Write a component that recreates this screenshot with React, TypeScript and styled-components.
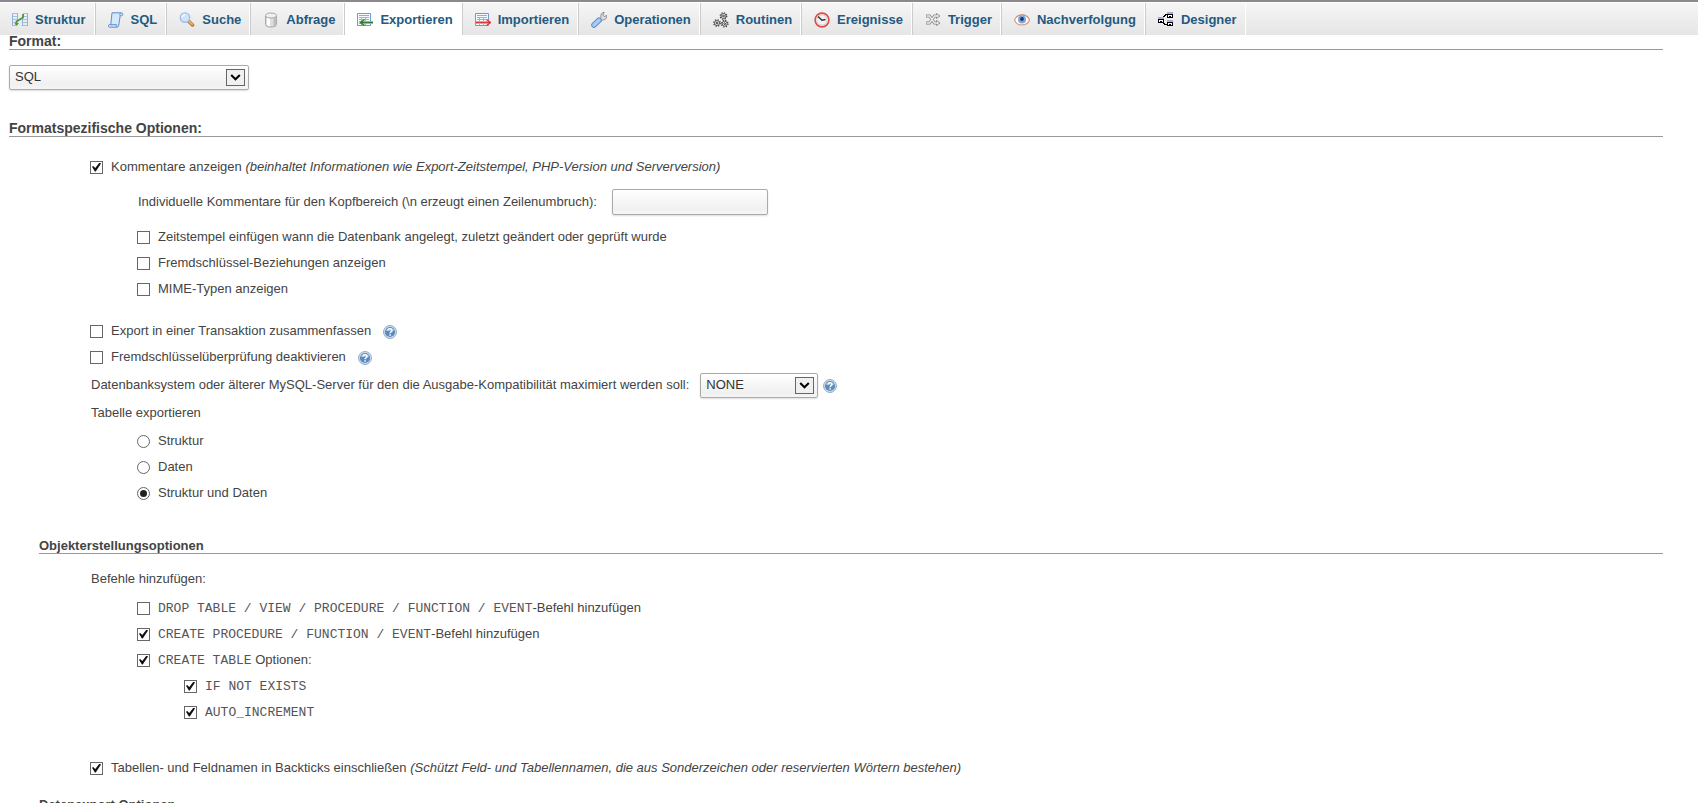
import React from "react";
import styled, { createGlobalStyle } from "styled-components";

const GlobalStyle = createGlobalStyle`
  *, *::before, *::after { box-sizing: border-box; }
  body {
    margin: 0;
    background: #fff;
    color: #444;
    font: 13px/26px "Liberation Sans", Arial, Helvetica, sans-serif;
  }
`;

const TabBar = styled.nav`
  border-top: 2px solid #8c888c;
  background: linear-gradient(#fff, #fff 1px, #f6f6f6 1px, #e5e5e5);
`;

const TabList = styled.ul`
  display: flex;
  margin: 0;
  padding: 1px 0 0;
  list-style: none;
`;

const TabItem = styled.li`
  border-left: 1px solid #ccc;
  border-right: 1px solid #fff;
  &:first-child {
    border-left: 0;
  }
`;

const TabLink = styled.a<{ $active?: boolean }>`
  display: flex;
  align-items: center;
  gap: 7px;
  height: 32px;
  padding: 1px 8px 0 12px;
  background: ${(p) => (p.$active ? "#fff" : "transparent")};
  color: #235a81;
  font-weight: bold;
  text-decoration: none;
  white-space: nowrap;
`;

const TabIcon = styled.svg`
  flex: none;
  width: 16px;
  height: 16px;
`;

const Page = styled.form`
  margin: 0 35px 0 9px;
`;

const Indented = styled.section`
  margin-left: 30px;
`;

const headingBase = `
  margin: 0;
  border-bottom: 1px solid #999;
  font-weight: bold;
`;

const Heading = styled.h3`
  ${headingBase}
  padding-bottom: 2px;
  font-size: 14px;
  line-height: 12px;
`;

const SubHeading = styled.h4`
  ${headingBase}
  font-size: 13px;
  line-height: 14px;
`;

const FormatField = styled.div`
  display: flex;
  padding: 15px 0 32px;
`;

const Options = styled.div<{ $top: number; $bottom: number }>`
  padding: ${(p) => p.$top}px 0 ${(p) => p.$bottom}px;
`;

const OptionList = styled.ul<{ $level?: number; $top?: number; $bottom?: number }>`
  margin: 0;
  padding: ${(p) => p.$top ?? 0}px 0 ${(p) => p.$bottom ?? 0}px ${(p) => p.$level ?? 0}px;
  list-style: none;
`;

const Row = styled.div<{ $height?: number; $gap?: number }>`
  display: flex;
  align-items: center;
  gap: ${(p) => p.$gap ?? 8}px;
  min-height: ${(p) => p.$height ?? 26}px;
  padding-left: 1px;
  > label {
    margin-right: 6px;
  }
`;

const HelpLink = styled.a`
  display: flex;
  padding-top: 2px;
`;

const OptionRow = styled.li`
  display: flex;
  align-items: center;
  gap: 8px;
  height: 26px;
  > ${HelpLink} {
    margin-left: 4px;
  }
`;

const tickBase = `
  appearance: none;
  flex: none;
  display: grid;
  place-items: center;
  width: 13px;
  height: 13px;
  margin: 0;
  border: 1px solid #666;
  background: #fff;
`;

const Checkbox = styled.input.attrs({ type: "checkbox" })`
  ${tickBase}
  &:checked::before {
    content: "";
    width: 9px;
    height: 9px;
    background: #111;
    clip-path: polygon(0 48%, 14% 38%, 36% 62%, 84% 0, 100% 10%, 42% 100%, 32% 100%);
  }
`;

const Radio = styled.input.attrs({ type: "radio" })`
  ${tickBase}
  border-radius: 50%;
  &:checked::before {
    content: "";
    width: 7px;
    height: 7px;
    border-radius: 50%;
    background: #222;
  }
`;

const Code = styled.code`
  color: #555;
  font: 13px "Liberation Mono", "Courier New", monospace;
`;

const controlBase = `
  border: 1px solid #aaa;
  border-radius: 2px;
  background: linear-gradient(#fff, #f0f0f0 80%, #f6f6f6);
  box-shadow: 0 1px 2px #ddd;
  color: #333;
  font: inherit;
`;

const TextInput = styled.input`
  ${controlBase}
  width: 156px;
  height: 26px;
  padding: 0 5px;
`;

const SelectBox = styled.div<{ $width: number }>`
  display: grid;
  align-items: center;
  width: ${(p) => p.$width}px;
  > * {
    grid-area: 1 / 1;
  }
`;

const SelectControl = styled.select`
  ${controlBase}
  appearance: none;
  width: 100%;
  height: 25px;
  padding: 0 28px 1px 5px;
  line-height: 22px;
`;

const SelectArrow = styled.svg`
  justify-self: end;
  width: 19px;
  height: 17px;
  margin-right: 4px;
  pointer-events: none;
`;

function Select({ id, width, options }: { id: string; width: number; options: string[] }) {
  return (
    <SelectBox $width={width}>
      <SelectControl id={id}>
        {options.map((o) => (
          <option key={o}>{o}</option>
        ))}
      </SelectControl>
      <SelectArrow viewBox="0 0 19 17" aria-hidden="true">
        <rect x=".5" y=".5" width="18" height="16" fill="#f0f0f0" stroke="#666" />
        <path d="M5.2 6l4.3 4.3L13.8 6" fill="none" stroke="#000" strokeWidth="2" />
      </SelectArrow>
    </SelectBox>
  );
}

function Help() {
  return (
    <HelpLink href="#doc" aria-label="Dokumentation">
      <svg width="14" height="14" viewBox="0 0 14 14" aria-hidden="true">
        <circle cx="7" cy="7" r="6.4" fill="#dce6ef" stroke="#8aa3bd" strokeWidth="1" />
        <circle cx="7" cy="7" r="5.1" fill="#5a8bbf" />
        <path d="M2.6 6a4.6 4.2 0 0 1 8.8 0z" fill="#8fb3d8" />
        <path d="M5 5.6c0-2.6 4-2.5 4-.2C9 6.8 7.1 6.7 7.1 8.3M7.1 9.3v1.5" fill="none" stroke="#fff" strokeWidth="1.5" />
      </svg>
    </HelpLink>
  );
}

function CheckOption({
  id,
  checked,
  help,
  children,
}: {
  id: string;
  checked?: boolean;
  help?: boolean;
  children: React.ReactNode;
}) {
  return (
    <OptionRow>
      <Checkbox id={id} defaultChecked={checked} />
      <label htmlFor={id}>{children}</label>
      {help && <Help />}
    </OptionRow>
  );
}

function RadioOption({ id, checked, children }: { id: string; checked?: boolean; children: React.ReactNode }) {
  return (
    <OptionRow>
      <Radio id={id} name="structure_or_data" defaultChecked={checked} />
      <label htmlFor={id}>{children}</label>
    </OptionRow>
  );
}

const sheet = (
  <>
    <path d="M.5 1.5h13v12H.5z" fill="#f5faff" stroke="#6f9bd0" />
    <path d="M2 3.5h10" stroke="#8fbf7d" />
    <path d="M2 5.5h10M2 7.5h10M2 9.5h10M2 11.5h10M4.5 5v8M8.5 5v8" stroke="#8fb8e0" fill="none" />
  </>
);

const gear = (x: number, y: number) => (
  <g transform={`translate(${x} ${y})`}>
    <circle r="3.3" fill="none" stroke="#444" strokeWidth="1.2" strokeDasharray="1.3 1.3" />
    <circle r="2.5" fill="#fff" stroke="#444" strokeWidth=".9" />
    <circle r=".9" fill="#fff" stroke="#222" strokeWidth=".9" />
  </g>
);

const tabs: { label: string; active?: boolean; icon: React.ReactNode }[] = [
  {
    label: "Struktur",
    icon: (
      <>
        <path d="M0 1.5h6M0 4.5h5M0 7.5h5M0 10.5h5M0 13.5h4M11 1.5h5M11 4.5h5M11 7.5h5M11 10.5h5M10 13.5h6" stroke="#9ec3e6" />
        <path d="M.5 2v12M5.5 1v8M10.5 7v7M15.5 1v13" stroke="#8cb4dc" />
        <path d="M4.5 13V9.5L11 5.5V2" stroke="#4d9a45" strokeWidth="1.9" fill="none" />
        <path d="M2.5 11l2 3 2.500-3z" fill="#4d9a45" />
      </>
    ),
  },
  {
    label: "SQL",
    icon: (
      <>
        <path d="M4 .8h9.5c1.8.1 1.8 2.7.2 2.9h-1.500l-1.400 9.300c-.2 1.500-1 2.200-2.200 2.200H1.500C-.1 14.900.1 12.700 1.600 12.500h1.200z" fill="#cfe3f8" stroke="#5f8fcb" />
        <path d="M4.8 2h6.600L9.900 12.500H4z" fill="#d6e8fb" />
        <path d="M2 12.7h6.500c-.4 1 .1 2 .8 2.200M12 3.500c-.6-.8-.2-2 .8-2.300" fill="none" stroke="#5f8fcb" />
      </>
    ),
  },
  {
    label: "Suche",
    icon: (
      <>
        <path d="M9.5 9l4 4" stroke="#b87a3c" strokeWidth="3.6" strokeLinecap="round" />
        <path d="M9.5 8.8l3.700 3.600" stroke="#edb866" strokeWidth="1.6" strokeLinecap="round" />
        <circle cx="6" cy="5.6" r="4.7" fill="#cfe4fa" stroke="#9dbfe8" strokeWidth="1.4" />
        <path d="M3 5.2C3.3 3.5 4.6 2.7 6 2.6" stroke="#fff" fill="none" strokeWidth="1.3" />
      </>
    ),
  },
  {
    label: "Abfrage",
    icon: (
      <>
        <path d="M2.5 3.5v9c0 3.4 11 3.4 11 0v-9z" fill="#dedede" stroke="#a8a8a8" />
        <path d="M4 6v7c1 .9 2 1 3 1.200V6.500z" fill="#fff" />
        <path d="M10.5 6.3V14c1 0 1.800-.5 2.300-1V5.500z" fill="#bcbcbc" />
        <ellipse cx="8" cy="3.5" rx="5.5" ry="2.5" fill="#f0f0f0" stroke="#a8a8a8" />
      </>
    ),
  },
  {
    label: "Exportieren",
    active: true,
    icon: (
      <>
        {sheet}
        <path d="M6 10.5h10" stroke="#fff" strokeWidth="3" />
        <path d="M4 10.5h12" stroke="#2f7d32" strokeWidth="2" />
        <path d="M7.5 7.500l-4 3 4 3" fill="none" stroke="#2f7d32" strokeWidth="1.5" />
      </>
    ),
  },
  {
    label: "Importieren",
    icon: (
      <>
        {sheet}
        <path d="M2 10.5h13" stroke="#fff" strokeWidth="3" />
        <path d="M1 10.5h14" stroke="#d8393b" strokeWidth="2" />
        <path d="M11.5 7.500l4 3-4 3" fill="none" stroke="#d8393b" strokeWidth="1.5" />
      </>
    ),
  },
  {
    label: "Operationen",
    icon: (
      <>
        <path d="M8 8.5l2-3.200c-.8-2.600.8-4.900 3.200-5l-1.300 2.700 1.300 1.500 2.600-1c.3 2.900-1.800 4.700-4.200 4.300L9.500 10z" fill="#dcdcdc" stroke="#858585" strokeWidth=".9" />
        <path d="M3 13l5-4.800" stroke="#5c8dcc" strokeWidth="5.6" strokeLinecap="round" />
        <path d="M3 13l5-4.800" stroke="#a9c9f0" strokeWidth="3.6" strokeLinecap="round" />
      </>
    ),
  },
  {
    label: "Routinen",
    icon: (
      <>
        {gear(10.5, 4)}
        {gear(4, 11)}
        {gear(11.7, 11.7)}
      </>
    ),
  },
  {
    label: "Ereignisse",
    icon: (
      <>
        <circle cx="8" cy="8" r="6.900" fill="#fff" stroke="#dd4b4b" strokeWidth="1.6" />
        <circle cx="8" cy="8" r="5.200" fill="#f3f3f3" stroke="#bbb" strokeWidth=".7" />
        <path d="M4 4.500L8 8.300l3.500-.8" fill="none" stroke="#333" strokeWidth="1.5" />
      </>
    ),
  },
  {
    label: "Trigger",
    icon: (
      <>
        <path d="M1 4h3.500l5 7H12M1 11h3.500l5-7H12" stroke="#858585" strokeWidth="3" fill="none" />
        <path d="M11.500 1.500L15 4l-3.500 2.500zM11.500 8.500L15 11l-3.500 2.500z" fill="#eee" stroke="#858585" strokeWidth=".9" />
        <path d="M1.500 4h3l5 7H12M1.500 11h3l5-7H12" stroke="#eee" strokeWidth="1.300" fill="none" />
      </>
    ),
  },
  {
    label: "Nachverfolgung",
    icon: (
      <>
        <path d="M.5 8C2.500 1.500 13.500 1.500 15.500 8c-2 6.500-13 6.500-15 0z" fill="#fff" stroke="#d9a183" strokeWidth="1.300" />
        <circle cx="8" cy="7.500" r="4" fill="#7fa6dc" />
        <circle cx="8" cy="7" r="1.900" fill="#1f3763" />
        <path d="M2 5.500C5 1.800 11 1.800 14 5.500" fill="none" stroke="#c98f74" />
      </>
    ),
  },
  {
    label: "Designer",
    icon: (
      <g shapeRendering="crispEdges">
        <path d="M9 0h6v2H9zM0 5h6v2H0zM9 8h6v2H9z" fill="#aaaadf" />
        <path d="M9.500 2.500h5v3h-5zM.5 7.500h5v3h-5zM9.500 10.500h5v3h-5z" fill="#fff" stroke="#000" />
        <path d="M11 4h2M2 9h2M11 12h2" stroke="#000" />
        <path d="M5 4.500h1v-1h1v-1h2M5 11.500h1v1h3" stroke="#000" fill="none" />
      </g>
    ),
  },
];

export default function App() {
  return (
    <>
      <GlobalStyle />
      <TabBar>
        <TabList>
          {tabs.map((t) => (
            <TabItem key={t.label}>
              <TabLink href={`#${t.label}`} $active={t.active}>
                <TabIcon viewBox="0 0 16 16" aria-hidden="true">
                  {t.icon}
                </TabIcon>
                {t.label}
              </TabLink>
            </TabItem>
          ))}
        </TabList>
      </TabBar>
      <Page>
        <Heading>
          <label htmlFor="format">Format:</label>
        </Heading>
        <FormatField>
          <Select id="format" width={240} options={["SQL"]} />
        </FormatField>

        <Heading>Formatspezifische Optionen:</Heading>
        <Options $top={17} $bottom={33}>
          <OptionList $level={81}>
            <CheckOption id="comments" checked>
              Kommentare anzeigen <em>(beinhaltet Informationen wie Export-Zeitstempel, PHP-Version und Serverversion)</em>
            </CheckOption>
          </OptionList>
          <OptionList as="div" $level={128}>
            <Row $height={44} $gap={9}>
              <label htmlFor="header">Individuelle Kommentare für den Kopfbereich (\n erzeugt einen Zeilenumbruch):</label>
              <TextInput id="header" type="text" />
            </Row>
          </OptionList>
          <OptionList $level={128} $bottom={16}>
            <CheckOption id="dates">Zeitstempel einfügen wann die Datenbank angelegt, zuletzt geändert oder geprüft wurde</CheckOption>
            <CheckOption id="relations">Fremdschlüssel-Beziehungen anzeigen</CheckOption>
            <CheckOption id="mime">MIME-Typen anzeigen</CheckOption>
          </OptionList>
          <OptionList $level={81}>
            <CheckOption id="transaction" help>
              Export in einer Transaktion zusammenfassen
            </CheckOption>
            <CheckOption id="fk" help>
              Fremdschlüsselüberprüfung deaktivieren
            </CheckOption>
          </OptionList>
          <OptionList as="div" $level={81}>
            <Row $height={30} $gap={5}>
              <label htmlFor="compat">
                Datenbanksystem oder älterer MySQL-Server für den die Ausgabe-Kompatibilität maximiert werden soll:
              </label>
              <Select id="compat" width={118} options={["NONE"]} />
              <Help />
            </Row>
            <Row>Tabelle exportieren</Row>
          </OptionList>
          <OptionList $level={128} $top={2}>
            <RadioOption id="structure">Struktur</RadioOption>
            <RadioOption id="data">Daten</RadioOption>
            <RadioOption id="both" checked>
              Struktur und Daten
            </RadioOption>
          </OptionList>
        </Options>

        <Indented>
          <SubHeading>Objekterstellungsoptionen</SubHeading>
          <Options $top={12} $bottom={17}>
            <OptionList as="div" $level={51}>
              <Row>Befehle hinzufügen:</Row>
            </OptionList>
            <OptionList $level={98} $top={3}>
              <CheckOption id="drop">
                <Code>DROP TABLE / VIEW / PROCEDURE / FUNCTION / EVENT</Code>-Befehl hinzufügen
              </CheckOption>
              <CheckOption id="procedure" checked>
                <Code>CREATE PROCEDURE / FUNCTION / EVENT</Code>-Befehl hinzufügen
              </CheckOption>
              <CheckOption id="table" checked>
                <Code>CREATE TABLE</Code> Optionen:
              </CheckOption>
            </OptionList>
            <OptionList $level={145} $bottom={30}>
              <CheckOption id="ifnotexists" checked>
                <Code>IF NOT EXISTS</Code>
              </CheckOption>
              <CheckOption id="autoincrement" checked>
                <Code>AUTO_INCREMENT</Code>
              </CheckOption>
            </OptionList>
            <OptionList $level={51}>
              <CheckOption id="backticks" checked>
                Tabellen- und Feldnamen in Backticks einschließen{" "}
                <em>(Schützt Feld- und Tabellennamen, die aus Sonderzeichen oder reservierten Wörtern bestehen)</em>
              </CheckOption>
            </OptionList>
          </Options>
          <SubHeading>Datenexport Optionen</SubHeading>
        </Indented>
      </Page>
    </>
  );
}
